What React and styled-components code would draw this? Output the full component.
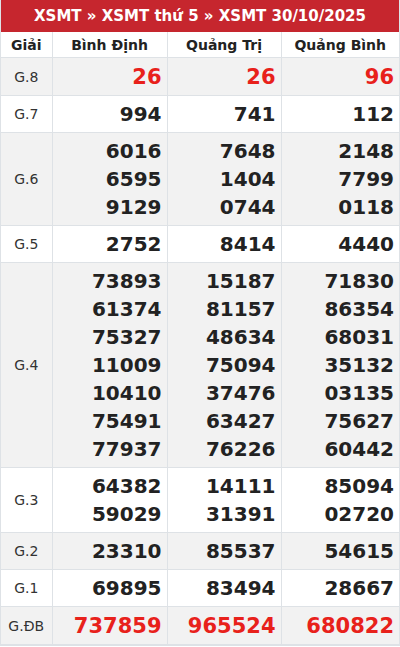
import React from 'react'
import styled, { createGlobalStyle } from 'styled-components'

const Global = createGlobalStyle`
  body {
    margin: 0;
    background: #fff;
    font-family: 'DejaVu Sans', 'Liberation Sans', sans-serif;
  }
`

const Wrap = styled.div`
  width: 400px;
  box-sizing: border-box;
  border: 1px solid #dee2e6;
  border-top: none;
`

const Title = styled.div`
  background: #c6262e;
  color: #fff;
  font-weight: bold;
  font-size: 15px;
  height: 32px;
  line-height: 32px;
  text-align: center;
`

const Table = styled.table`
  width: 100%;
  border-collapse: collapse;
  table-layout: fixed;
  color: #222;
`

const Th = styled.th`
  font-size: 14px;
  font-weight: bold;
  height: 25px;
  padding: 0;
  text-align: center;
  border: 1px solid #dee2e6;
  border-top: none;
  &:first-child { border-left: none; }
  &:last-child { border-right: none; }
`

const Row = styled.tr`
  background: ${p => (p.$alt ? '#f2f2f2' : '#fff')};
`

const Label = styled.td`
  font-size: 14px;
  color: #333;
  text-align: center;
  padding: 0;
  border: 1px solid #dee2e6;
  border-left: none;
`

const Cell = styled.td`
  text-align: right;
  padding: ${p => (p.$big ? '5px' : '4px')} 5px 4px 0;
  border: 1px solid #dee2e6;
  &:last-child { border-right: none; }
`

const Num = styled.div`
  font-size: ${p => (p.$red ? '21px' : '20px')};
  font-weight: bold;
  line-height: 28px;
  color: ${p => (p.$red ? '#e8211b' : '#222')};
`

const rows = [
  ['G.8', [['26'], ['26'], ['96']], true],
  ['G.7', [['994'], ['741'], ['112']]],
  ['G.6', [['6016', '6595', '9129'], ['7648', '1404', '0744'], ['2148', '7799', '0118']]],
  ['G.5', [['2752'], ['8414'], ['4440']]],
  ['G.4', [
    ['73893', '61374', '75327', '11009', '10410', '75491', '77937'],
    ['15187', '81157', '48634', '75094', '37476', '63427', '76226'],
    ['71830', '86354', '68031', '35132', '03135', '75627', '60442'],
  ]],
  ['G.3', [['64382', '59029'], ['14111', '31391'], ['85094', '02720']]],
  ['G.2', [['23310'], ['85537'], ['54615']]],
  ['G.1', [['69895'], ['83494'], ['28667']]],
  ['G.ĐB', [['737859'], ['965524'], ['680822']], true],
]

export default function App() {
  return (
    <Wrap>
      <Global />
      <Title>XSMT » XSMT thứ 5 » XSMT 30/10/2025</Title>
      <Table>
        <colgroup>
          <col style={{ width: 51 }} />
          <col style={{ width: 115 }} />
          <col style={{ width: 114 }} />
          <col />
        </colgroup>
        <thead>
          <tr>
            <Th>Giải</Th>
            <Th>Bình Định</Th>
            <Th>Quảng Trị</Th>
            <Th>Quảng Bình</Th>
          </tr>
        </thead>
        <tbody>
          {rows.map(([name, cols, red], i) => (
            <Row key={name} $alt={i % 2 === 0}>
              <Label>{name}</Label>
              {cols.map((nums, j) => (
                <Cell key={j} $big={red}>
                  {nums.map((n, k) => (
                    <Num key={k} $red={red}>{n}</Num>
                  ))}
                </Cell>
              ))}
            </Row>
          ))}
        </tbody>
      </Table>
    </Wrap>
  )
}
